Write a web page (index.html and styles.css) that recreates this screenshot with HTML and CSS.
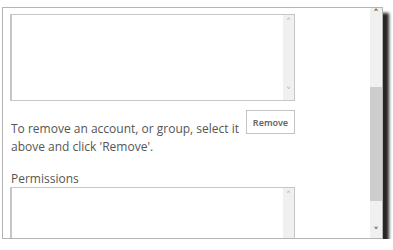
FILE: index.html
```html
<!DOCTYPE html>
<html lang="en">

<head>
    <meta charset="UTF-8">
    <meta name="viewport" content="width=device-width, initial-scale=1.0">
    <title>Permissions</title>
    <link rel="stylesheet" href="styles.css">
</head>

<body>
    <div class="window">
        <div class="content">
            <div class="listbox">
                <div class="listbox-body"></div>
                <div class="mini-scroll">
                    <span class="arrow">&#708;</span>
                    <span class="arrow">&#709;</span>
                </div>
            </div>

            <div class="remove-row">
                <p class="hint">To remove an account, or group, select it above and click 'Remove'.</p>
                <button class="remove-btn">Remove</button>
            </div>

            <label class="field-label">Permissions</label>
            <div class="listbox listbox-tall">
                <div class="listbox-body"></div>
                <div class="mini-scroll">
                    <span class="arrow">&#708;</span>
                </div>
            </div>
        </div>

        <div class="scrollbar">
            <span class="sb-arrow">&#708;</span>
            <div class="sb-track">
                <div class="sb-thumb"></div>
            </div>
            <span class="sb-arrow">&#709;</span>
        </div>
    </div>
</body>

</html>
```

FILE: styles.css
```css
* {
    margin: 0;
    padding: 0;
    box-sizing: border-box;
}

body {
    background-color: #fff;
    font-family: 'Open Sans', 'Noto Sans', sans-serif;
    color: #555;
    padding: 7px 0 0 2px;
}

.window {
    width: 381px;
    height: 232px;
    border: 1px solid #b4b4b4;
    background-color: #fff;
    display: flex;
    overflow: hidden;
    box-shadow: 6px 6px 3px #262626;
}

.content {
    flex: 1;
    padding: 6px 75px 0 7px;
    overflow: hidden;
}

.listbox {
    display: flex;
    height: 87px;
    border: 1px solid #c6c6c6;
    border-left-width: 2px;
}

.listbox-tall {
    height: 90px;
}

.listbox-body {
    flex: 1;
}

.mini-scroll {
    width: 11px;
    background-color: #f0f0f0;
    display: flex;
    flex-direction: column;
    justify-content: space-between;
    align-items: center;
    padding: 2px 0;
}

.arrow {
    font-family: 'DejaVu Sans', sans-serif;
    font-size: 11px;
    line-height: 12px;
    color: #bcbcbc;
}

.remove-row {
    display: flex;
    justify-content: space-between;
    align-items: flex-start;
    margin-top: 9px;
}

.hint {
    font-size: 12px;
    line-height: 18px;
    width: 230px;
    margin-top: 10px;
    padding-left: 1px;
    color: #555;
}

.remove-btn {
    width: 49px;
    height: 24px;
    border: 1px solid #c4c4c4;
    background-color: #fff;
    font-family: 'Noto Sans', sans-serif;
    font-size: 9px;
    font-weight: 600;
    color: #666;
}

.field-label {
    display: block;
    font-size: 12px;
    line-height: 16px;
    margin-top: 15px;
    padding-left: 1px;
    color: #555;
}

.scrollbar {
    width: 12px;
    background-color: #f0f0f0;
    display: flex;
    flex-direction: column;
    align-items: center;
}

.sb-arrow {
    font-family: 'DejaVu Sans', sans-serif;
    font-size: 11px;
    font-weight: bold;
    line-height: 12px;
    height: 12px;
    color: #555;
}

.sb-track {
    flex: 1;
    width: 100%;
    padding-top: 67px;
    padding-bottom: 25px;
    display: flex;
}

.sb-thumb {
    flex: 1;
    background-color: #cdcdcd;
}
```
